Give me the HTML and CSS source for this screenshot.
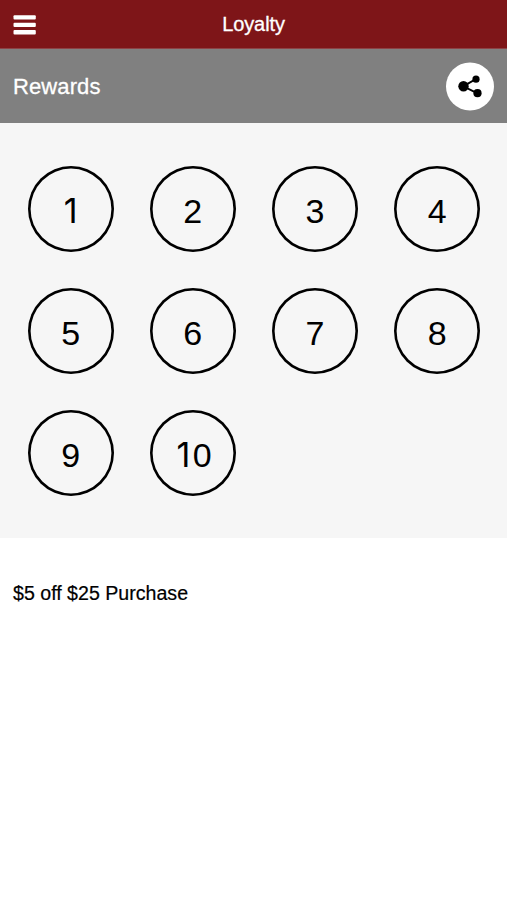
FILE: index.html
```html
<!DOCTYPE html>
<html lang="en">
<head>
<meta charset="utf-8">
<title>Loyalty</title>
<link rel="stylesheet" href="styles.css">
</head>
<body>
<header class="topbar">
  <button class="menu" aria-label="Menu">
    <svg width="23" height="20" viewBox="0 0 23 20" fill="#fff"><rect x=".5" y=".3" width="22.3" height="4.3" rx="1"/><rect x=".5" y="7.7" width="22.3" height="4.3" rx="1"/><rect x=".5" y="15.1" width="22.3" height="4.3" rx="1"/></svg>
  </button>
  <h1 class="title">Loyalty</h1>
</header>
<section class="subbar">
  <h2 class="heading">Rewards</h2>
  <button class="share" aria-label="Share">
    <svg width="48" height="49" viewBox="0 0 48 49"><circle cx="24" cy="24.5" r="24" fill="#fff"/><path d="M30 17 17.3 24.3 31.5 31.3" fill="none" stroke="#000" stroke-width="2"/><circle cx="17.5" cy="24.2" r="5.2"/><circle cx="30" cy="17.2" r="3.6"/><circle cx="31.5" cy="31.2" r="4.1"/></svg>
  </button>
</section>
<main>
  <ol class="stamps">
    <li class="stamp"><span class="one">1</span></li>
    <li class="stamp">2</li>
    <li class="stamp">3</li>
    <li class="stamp">4</li>
    <li class="stamp">5</li>
    <li class="stamp">6</li>
    <li class="stamp">7</li>
    <li class="stamp">8</li>
    <li class="stamp">9</li>
    <li class="stamp"><span class="one">1</span>0</li>
  </ol>
  <p class="offer">$5 off $25 Purchase</p>
</main>
</body>
</html>
```
FILE: styles.css
```css
* { box-sizing: border-box; }
body {
  margin: 0;
  min-height: 100vh;
  background: #fff;
  color: #000;
  font-family: "Liberation Sans", Arial, sans-serif;
}
button { border: 0; padding: 0; }
.topbar {
  display: grid;
  grid-template-columns: 36px 1fr 36px;
  align-items: center;
  height: 49px;
  background: #7e1518;
  border-bottom: 1px solid #8d4346;
}
.menu {
  display: flex;
  margin: 1px 0 0 13px;
  background: none;
}
.title {
  margin: 0;
  color: #fff;
  font-size: 20px;
  font-weight: 400;
  line-height: 24px;
  text-align: center;
  letter-spacing: -.1px;
  -webkit-text-stroke: .3px;
}
.subbar {
  display: flex;
  justify-content: space-between;
  align-items: center;
  height: 74px;
  padding: 0 13px;
  background: #808080;
}
.heading {
  margin: 1px 0 0;
  color: #fff;
  font-size: 22px;
  font-weight: 400;
  line-height: 26px;
  letter-spacing: .1px;
  -webkit-text-stroke: .3px;
}
.share {
  display: flex;
  background: none;
}
.stamps {
  display: grid;
  grid-template-columns: repeat(4, 86px);
  grid-auto-rows: 86px;
  gap: 36.2px;
  height: 415px;
  margin: 0;
  padding: 42.5px 0 0 27.6px;
  list-style: none;
  background: #f6f6f6;
}
.stamp {
  display: flex;
  justify-content: center;
  align-items: center;
  padding-top: 5px;
  border-radius: 50%;
  box-shadow: inset 0 0 0 2.6px #000;
  font-size: 34px;
  line-height: 40px;
}
.one {
  width: 18.9px;
  font-family: Inter, "Liberation Sans", sans-serif;
  text-align: center;
}
.offer {
  margin: 0;
  padding: 43px 13px 0;
  font-size: 19.6px;
  line-height: 24px;
  -webkit-text-stroke: .2px;
}
```
